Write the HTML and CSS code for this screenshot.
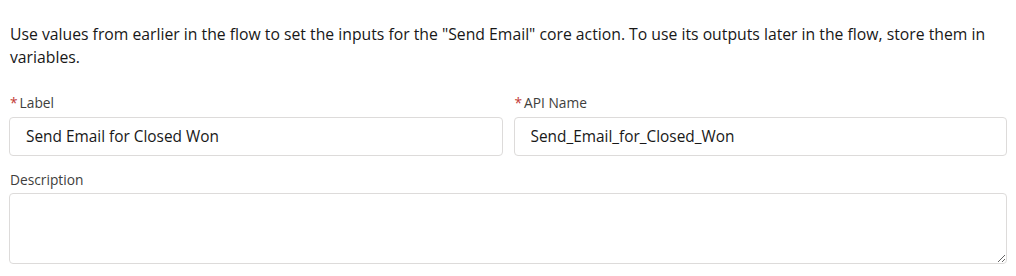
FILE: index.html
```html
<!DOCTYPE html>
<html lang="en">
<head>
    <meta charset="UTF-8">
    <meta name="viewport" content="width=device-width, initial-scale=1.0">
    <title>Send Email Action</title>
    <link rel="stylesheet" href="styles.css">
</head>
<body>
    <div class="panel">
        <p class="intro">Use values from earlier in the flow to set the inputs for the "Send Email" core action. To use its outputs later in the flow, store them in variables.</p>

        <div class="row">
            <div class="field">
                <label class="field-label" for="label-input"><abbr class="required">*</abbr>Label</label>
                <input type="text" id="label-input" class="field-input" value="Send Email for Closed Won">
            </div>
            <div class="field">
                <label class="field-label" for="api-input"><abbr class="required">*</abbr>API Name</label>
                <input type="text" id="api-input" class="field-input" value="Send_Email_for_Closed_Won">
            </div>
        </div>

        <div class="field desc">
            <label class="field-label" for="desc-input">Description</label>
            <textarea id="desc-input" class="field-textarea"></textarea>
        </div>
    </div>
</body>
</html>
```

FILE: styles.css
```css
body {
    margin: 0;
    font-family: "Open Sans", "Noto Sans", Arial, sans-serif;
    color: #181818;
    background-color: #ffffff;
}
.panel {
    padding: 23px 9px 0 9px;
}
.intro {
    margin: 0 0 0 1px;
    font-size: 15.75px;
    line-height: 23px;
}
.row {
    display: flex;
    gap: 11px;
    margin-top: 25px;
}
.row .field {
    flex: 1;
}
.field {
    display: flex;
    flex-direction: column;
}
.field-label {
    font-size: 13.75px;
    line-height: 18px;
    color: #3e3e3c;
    padding-left: 1px;
    margin-bottom: 5px;
}
.required {
    color: #c23934;
    text-decoration: none;
    margin-right: 2px;
}
.field-input {
    box-sizing: border-box;
    height: 39px;
    padding: 0 16px;
    border: 1px solid #dddbda;
    border-radius: 4px;
    font-family: inherit;
    font-size: 15.4px;
    color: #181818;
}
.desc {
    margin-top: 15px;
}
.desc .field-label {
    margin-bottom: 4px;
}
.field-textarea {
    box-sizing: border-box;
    height: 71px;
    border: 1px solid #dddbda;
    border-radius: 4px;
    font-family: inherit;
    font-size: 15.4px;
    resize: vertical;
}
```
